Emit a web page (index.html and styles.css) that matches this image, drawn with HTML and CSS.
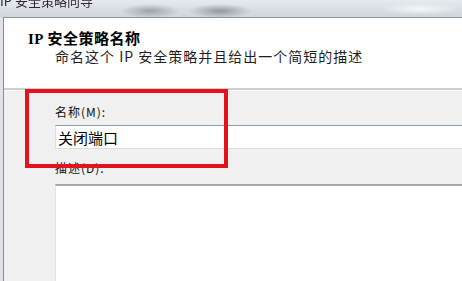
FILE: index.html
```html
<!DOCTYPE html>
<html lang="zh-CN">
<head>
    <meta charset="UTF-8">
    <meta name="viewport" content="width=device-width, initial-scale=1.0">
    <title>IP 安全策略向导</title>
    <link rel="stylesheet" href="styles.css">
</head>
<body>
    <div class="window">
        <!-- 标题栏 -->
        <div class="titlebar">
            <span class="title">IP 安全策略向导</span>
        </div>

        <div class="inner">
            <!-- 顶部说明 -->
            <div class="header">
                <h1>IP 安全策略名称</h1>
                <p>命名这个 IP 安全策略并且给出一个简短的描述</p>
            </div>

            <!-- 表单 -->
            <div class="form">
                <label class="label" for="name">名称(M):</label>
                <input class="field" id="name" type="text" value="关闭端口" readonly>
                <label class="label second" for="desc">描述(D):</label>
                <textarea class="area" id="desc" readonly></textarea>
            </div>
        </div>

        <!-- 标注框 -->
        <div class="mark"></div>
    </div>
</body>
</html>
```

FILE: styles.css
```css
html, body {
    margin: 0;
    padding: 0;
}

body {
    width: 462px;
    height: 281px;
    overflow: hidden;
    font-family: "Noto Sans CJK SC", "Liberation Sans", sans-serif;
    color: #000;
}

.window {
    position: relative;
    height: 281px;
    padding-left: 3px;
    background: #dfe3e7;
    overflow: hidden;
}

.titlebar {
    height: 17px;
    margin-left: -3px;
    overflow: hidden;
    background:
        radial-gradient(ellipse 30px 7px at 150px 11px, rgba(110, 115, 122, 0.55), transparent),
        radial-gradient(ellipse 32px 7px at 220px 11px, rgba(100, 105, 112, 0.6), transparent),
        radial-gradient(ellipse 40px 6px at 420px 9px, rgba(250, 252, 255, 0.8), transparent),
        linear-gradient(#e6eaee, #cfd5db);
}

.titlebar .title {
    display: block;
    margin-top: -6px;
    font-size: 13px;
    line-height: 13px;
    color: #2a2a2a;
    filter: blur(0.4px);
}

.inner {
    height: 264px;
    border-top: 1px solid #8f959b;
    border-left: 1px solid #8c8c8c;
    background: #f0f0f0;
}

.header {
    height: 57px;
    padding: 13px 0 0 24px;
    background: #fff;
    border-bottom: 2px solid #cfcfcf;
}

.header h1 {
    margin: 0;
    font-family: "Liberation Serif", "Noto Sans CJK SC", serif;
    font-size: 15px;
    line-height: 17px;
    font-weight: bold;
    letter-spacing: 0.5px;
}

.header p {
    margin: 0 0 0 27px;
    font-size: 14px;
    line-height: 16px;
    letter-spacing: 1px;
    color: #1e1e1e;
}

.form {
    display: flex;
    flex-direction: column;
    padding: 14px 0 0 51px;
    border-top: 1px solid #fafafa;
}

.label {
    display: block;
    font-size: 12px;
    line-height: 14px;
    letter-spacing: 1px;
    margin-bottom: 6px;
    color: #111;
}

.label.second {
    margin-top: 12px;
    margin-bottom: 9px;
}

.field {
    box-sizing: border-box;
    width: 440px;
    height: 24px;
    margin: 0;
    padding: 0 2px;
    font-family: "Noto Sans CJK SC", sans-serif;
    font-size: 15px;
    color: #000;
    background: #fff;
    border: 1px solid #dadee3;
    border-top-color: #8b9bb0;
    outline: none;
}

.area {
    box-sizing: border-box;
    width: 440px;
    height: 110px;
    margin: 0;
    padding: 0;
    resize: none;
    background: #fff;
    border: 1px solid #e2e2e2;
    border-top: 2px solid #a8a8a8;
    outline: none;
}

.mark {
    position: absolute;
    left: 25px;
    top: 89px;
    width: 195px;
    height: 71px;
    border: 4px solid #e3121b;
}
```
